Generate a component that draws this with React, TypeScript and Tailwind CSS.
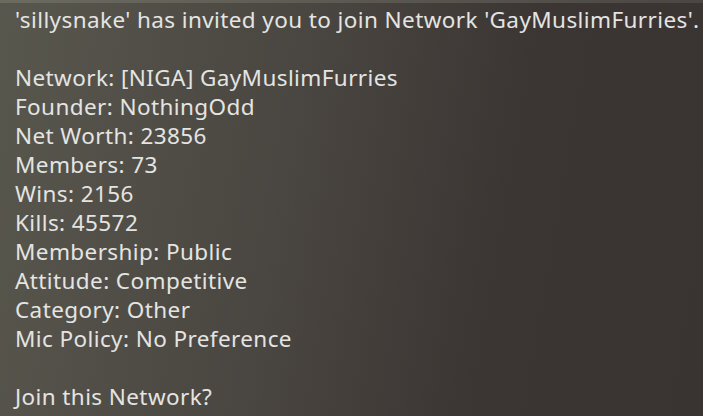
import React from "react";

const lines = [
  "'sillysnake' has invited you to join Network 'GayMuslimFurries'.",
  "",
  "Network: [NIGA] GayMuslimFurries",
  "Founder: NothingOdd",
  "Net Worth: 23856",
  "Members: 73",
  "Wins: 2156",
  "Kills: 45572",
  "Membership: Public",
  "Attitude: Competitive",
  "Category: Other",
  "Mic Policy: No Preference",
  "",
  "Join this Network?",
];

export default function App() {
  return (
    <div className="w-[703px] h-[416px] overflow-hidden flex flex-col bg-[linear-gradient(100deg,#58574d_0%,#4a4641_40%,#3b3633_70%,#393432_100%)]">
      <div className="h-[3px] bg-[linear-gradient(90deg,#6c6b60,#4b4643)]" />
      <div
        className="pl-[15px] pt-[2px] text-[22.5px] tracking-[0.4px] leading-[29px] text-[#e4e4e2] whitespace-nowrap"
        style={{ fontFamily: "'Noto Sans', sans-serif" }}
      >
        {lines.map((l, i) => (
          <div key={i} className="h-[29px]">
            {l}
          </div>
        ))}
      </div>
    </div>
  );
}
